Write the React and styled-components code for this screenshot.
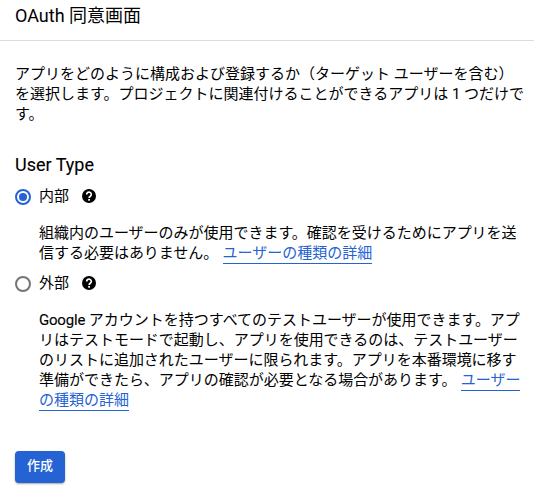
import React from "react";
import styled, { createGlobalStyle } from "styled-components";

const Global = createGlobalStyle`
  *{box-sizing:border-box}
  body{margin:0;background:#fff;color:#000;font-family:Roboto,"Noto Sans CJK JP",sans-serif;font-size:15px;line-height:20px;}
`;
const Page = styled.main`height:494px;overflow:hidden;display:flex;flex-direction:column;`;
const Header = styled.header`height:41px;flex:none;border-bottom:1px solid #dcdcdc;padding:4px 15px 0;`;
const Title = styled.h1`margin:0;font-size:18px;line-height:24px;font-weight:400;`;
const Body = styled.div`padding:23px 0 0 15px;display:flex;flex-direction:column;align-items:flex-start;`;
const Line = styled.span`display:block;width:max-content;white-space:nowrap;height:20px;`;
const Text = styled.p`margin:0;`;
const Heading = styled.h2`margin:29px 0 0;font-size:18px;line-height:24px;font-weight:400;-webkit-text-stroke:.1px #000;`;
const Option = styled.label`display:flex;align-items:center;height:20px;margin-top:${p => p.$top}px;`;
const OptionName = styled.span`padding-bottom:2px;`;
const Radio = styled.span`
  width:16px;height:16px;border-radius:50%;border:2px solid ${p => p.$on ? "#2563d4" : "#757575"};
  display:grid;place-items:center;margin-right:8px;
  &::after{content:"";width:8px;height:8px;border-radius:50%;background:${p => p.$on ? "#2563d4" : "transparent"};}
`;
const Help = styled.svg`width:14px;height:14px;margin:0 0 2px 13px;`;
const Description = styled(Text)`margin:16px 0 0 24px;letter-spacing:-.02px;`;
const Latin = styled.span`letter-spacing:-.2px;-webkit-text-stroke:.1px #000;`;
const Link = styled.a`color:#2563d4;border-bottom:1px solid #2563d4;padding-bottom:1px;`;
const Gap = styled.span`padding-left:.6px;`;
const Button = styled.button`
  margin-top:41px;width:50px;height:32px;border:0;border-radius:4px;background:#2563d4;color:#fff;
  font:500 13px/20px Roboto,"Noto Sans CJK JP",sans-serif;padding:0 0 2px;
  box-shadow:0 1px 2px rgba(0,0,0,.35);
`;
const HelpIcon = () => (
  <Help viewBox="0 0 14 14"><circle cx="7" cy="7" r="7" fill="#000" />
    <path d="M4.7 5.5A2.3 2.3 0 1 1 8.6 7C7.6 7.7 7.1 8.1 7.1 9.1" fill="none" stroke="#fff" strokeWidth="1.7" />
    <rect x="6.2" y="10" width="1.8" height="1.7" fill="#fff" /></Help>
);

export default function App() {
  return <><Global /><Page>
    <Header><Title>OAuth 同意画面</Title></Header>
    <Body>
      <Text>
        <Line>アプリをどのように構成および登録するか（ターゲット ユーザーを含む）</Line>
        <Line>を選択します。プロジェクトに関連付けることができるアプリは 1 つだけで</Line>
        <Line>す。</Line>
      </Text>
      <Heading>User Type</Heading>
      <Option $top={10}><Radio $on /><OptionName>内部</OptionName><HelpIcon /></Option>
      <Description>
        <Line>組織内のユーザーのみが使用できます。確認を受けるためにアプリを送</Line>
        <Line>信する必要はありません。<Gap> </Gap><Link>ユーザーの種類の詳細</Link></Line>
      </Description>
      <Option $top={11}><Radio /><OptionName>外部</OptionName><HelpIcon /></Option>
      <Description>
        <Line><Latin>Google</Latin> アカウントを持つすべてのテストユーザーが使用できます。アプ</Line>
        <Line>リはテストモードで起動し、アプリを使用できるのは、テストユーザー</Line>
        <Line>のリストに追加されたユーザーに限られます。アプリを本番環境に移す</Line>
        <Line>準備ができたら、アプリの確認が必要となる場合があります。<Gap> </Gap><Link>ユーザー</Link></Line>
        <Line><Link>の種類の詳細</Link></Line>
      </Description>
      <Button>作成</Button>
    </Body>
  </Page></>;
}
